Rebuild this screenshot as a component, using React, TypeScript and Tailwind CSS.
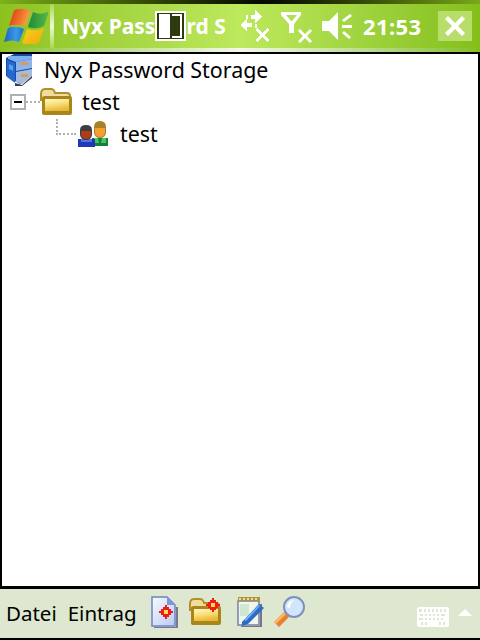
import React from 'react';

const uiFont = '[font-family:"Noto_Sans","Liberation_Sans",sans-serif]';

const WinFlag = () => (
  <svg width="44" height="36" viewBox="0 0 44 36">
    <defs>
      <linearGradient id="fr" x1="0" y1="0" x2="1" y2="0.3">
        <stop offset="0" stopColor="#d93a10" />
        <stop offset="0.6" stopColor="#f2702a" />
        <stop offset="1" stopColor="#f0a848" />
      </linearGradient>
      <linearGradient id="fg" x1="0" y1="0" x2="1" y2="0">
        <stop offset="0" stopColor="#1f8a3a" />
        <stop offset="1" stopColor="#58b848" />
      </linearGradient>
      <linearGradient id="fb" x1="0" y1="0" x2="1" y2="0">
        <stop offset="0" stopColor="#1c62c4" />
        <stop offset="0.6" stopColor="#3a9ae8" />
        <stop offset="1" stopColor="#1f70c8" />
      </linearGradient>
      <linearGradient id="fy" x1="0" y1="0" x2="1" y2="1">
        <stop offset="0" stopColor="#f8d020" />
        <stop offset="1" stopColor="#f0a808" />
      </linearGradient>
    </defs>
    <path d="M10 2 Q19 -1 27 3 L21 19 Q13 15 5 18 Z" fill="url(#fr)" />
    <path d="M29 4 Q37 8 45 3 L40 18 Q32 22 24 19 Z" fill="url(#fg)" />
    <path d="M4 20 Q12 17 20 21 L15 34 Q8 31 0 34 Z" fill="url(#fb)" />
    <path d="M23 21 Q32 24 40 20 L35 35 Q26 38 18 35 Z" fill="url(#fy)" />
  </svg>
);

const XMark = ({ x, y }: { x: number; y: number }) => (
  <path
    transform={`translate(${x} ${y})`}
    d="M2 0l5 5 5-5 2 2-5 5 5 5-2 2-5-5-5 5-2-2 5-5-5-5z"
    fill="white"
  />
);

const SyncX = () => (
  <svg width="32" height="34" viewBox="0 0 32 34" fill="white" shapeRendering="crispEdges">
    <path d="M11 5h4V0l7 6v1l-7 6V9h-4z" />
    <path d="M6 5h2v4H6z" />
    <path d="M0 15l7-6v4h5v4H7v4l-7-6z" />
    <path d="M15 14h2v4h-2z" />
    <XMark x={15} y={18} />
  </svg>
);

const AntennaX = () => (
  <svg width="32" height="34" viewBox="0 0 32 34" fill="white">
    <path d="M0 1h20v3l-7 9v9H8v-9L0 4z M5 4l5 6 1 0 5-6z" fillRule="evenodd" />
    <XMark x={17} y={18} />
  </svg>
);

const SpeakerOff = () => (
  <svg width="32" height="32" viewBox="0 0 32 32" fill="white">
    <path d="M0 10h7L16 1v28L7 20H0z" />
    <path d="M20 9l8-6 2 2-8 6z M20 14h10v3H20z M20 22l2-2 7 6-2 2z" />
  </svg>
);

const Badge = () => (
  <g shapeRendering="crispEdges">
    <path d="M6 0h2v2h2v2h2v2h2v2h-2v2h-2v2H8v2H6v-2H4v-2H2V8H0V6h2V4h2V2h2z" fill="#f01a1a" />
    <rect x="5" y="5" width="4" height="4" fill="#ffe14a" />
  </g>
);

const ServerIcon = () => (
  <svg width="28" height="32" viewBox="0 0 28 32">
    <path d="M0 4l8-4h18v20l-12 10L0 22z" fill="#1a4aa8" />
    <path d="M2 2h24v3L10 8 2 5z" fill="#7fb0ee" />
    <path d="M10 8l16-3v9l-16 3z" fill="#8fb4e8" />
    <path d="M10 18l16-3v7l-10 8-6-2z" fill="#a4bcdc" />
    <rect x="15" y="8" width="7" height="3" fill="#d89a60" />
    <rect x="15" y="20" width="7" height="3" fill="#d89a60" />
    <path d="M1 6l8 3v20l-8-6z" fill="#2568d0" />
    <path d="M3 10l4 2v5l-4-2z" fill="#58a0ee" />
    <path d="M9 29l7 2 10-9v2L16 32H9z" fill="#3a3a50" />
  </svg>
);

const FolderOpen = ({ badge, id }: { badge?: boolean; id: string }) => (
  <svg width="33" height="28" viewBox="0 0 33 28">
    <defs>
      <linearGradient id={id} x1="0" y1="0" x2="0.3" y2="1">
        <stop offset="0" stopColor="#fdf6c8" />
        <stop offset="0.5" stopColor="#fbe07a" />
        <stop offset="1" stopColor="#e8b838" />
      </linearGradient>
    </defs>
    <path d="M1 6q0-5 4-5h6q3 0 4 4h12q3 0 3 3v4H1z" fill="#f0dc9c" stroke="#b48e28" strokeWidth="2" />
    <path d="M2 10q0-2 3-2h25q2 0 2 2v15q0 2-2 2H4q-2 0-2-2z" fill="#a8861c" />
    <path d="M5 11h24v12H5z" fill={`url(#${id})`} />
    {badge && (
      <g transform="translate(17 0)">
        <Badge />
      </g>
    )}
  </svg>
);

const Users = () => (
  <svg width="30" height="26" viewBox="0 0 30 26">
    <path d="M14 17h16v8H14z" fill="#15803a" />
    <path d="M16 17h4l1 5h2l1-5h4v5H16z" fill="#48c468" />
    <path d="M16 6q0-6 6-6t6 6v6q-1 5-6 5t-6-5z" fill="#a8802a" />
    <path d="M17 7h10v5q-1 4-5 4t-5-4z" fill="#f4a030" />
    <path d="M0 18h17v8H0z" fill="#2038b8" />
    <path d="M3 18h11v3H3z" fill="#5070e8" />
    <path d="M2 9q0-5 6-5t6 5v5q-1 5-6 5t-6-5z" fill="#3c3c44" />
    <path d="M3 10h10v4q-1 4-5 4t-5-4z" fill="#b03c14" />
  </svg>
);

const NewDoc = () => (
  <svg width="28" height="32" viewBox="0 0 28 32">
    <defs>
      <linearGradient id="nd" x1="0" y1="0" x2="1" y2="1">
        <stop offset="0" stopColor="#f6f9ff" />
        <stop offset="1" stopColor="#b8ccf4" />
      </linearGradient>
    </defs>
    <path d="M1 1h15l8 8v21H1z" fill="url(#nd)" stroke="#6f83c0" strokeWidth="1.5" />
    <path d="M16 1l8 8h-8z" fill="#7f98d8" />
    <path d="M3 31h22V11h2v21H3z" fill="#77778e" />
    <g transform="translate(8 9)">
      <Badge />
    </g>
  </svg>
);

const Notepad = () => (
  <svg width="28" height="32" viewBox="0 0 28 32">
    <path d="M1 5h21v24H1z" fill="#eef6ee" stroke="#7a80a4" strokeWidth="1.5" />
    <path d="M23 8h2v23H4v-1h19z" fill="#74748a" />
    <path d="M1 1h22v4H1z" fill="#b09438" />
    <path d="M2 2h2v2H2zm4 0h2v2H6zm4 0h2v2h-2zm4 0h2v2h-2zm4 0h2v2h-2z" fill="#ece0a0" />
    <path d="M3 8h9v12H3z" fill="#cfe8d4" />
    <path d="M5 26L22 8l5 4L11 28l-6 2z" fill="#2a6cc8" />
    <path d="M7 24L22 9l1 1L9 25z" fill="#78b0f0" />
  </svg>
);

const Search = () => (
  <svg width="33" height="32" viewBox="0 0 33 32">
    <path d="M1 26L11 16l5 5L6 31z" fill="#e88030" />
    <path d="M1 26l10-10 2 2L3 28z" fill="#f8b868" />
    <circle cx="21" cy="11" r="10" fill="#cfe6fb" stroke="#8090ba" strokeWidth="2" />
    <path d="M14 11q1-7 8-7q-5 2-5 8z" fill="white" />
  </svg>
);

const Keyboard = () => (
  <svg width="32" height="20" viewBox="0 0 32 20" shapeRendering="crispEdges">
    <path d="M1 0h30v1h1v18h-1v1H1v-1H0V1h1z" fill="white" />
    <path
      d="M2 2h3v3H2zm5 0h2v3H7zm4 0h2v3h-2zm4 0h2v3h-2zm4 0h2v3h-2zm4 0h2v3h-2zm4 0h2v3h-2zM3 7h3v2H3zm5 0h2v2H8zm4 0h2v2h-2zm4 0h2v2h-2zm4 0h2v2h-2zm4 0h4v2h-4zM2 11h4v2H2zm6 0h2v2H8zm4 0h2v2h-2zm4 0h2v2h-2zm4 0h2v2h-2zm4 0h2v2h-2zM4 15h2v3H4zm4 0h2v3H8zm14 0h2v3h-2zm4 0h2v3h-2z"
      fill="#dee8d0"
    />
  </svg>
);

export default function App() {
  return (
    <div className={`relative flex h-[640px] w-[480px] flex-col overflow-hidden bg-white ${uiFont}`}>
      {/* Title bar */}
      <div className="h-[4px] shrink-0 bg-gradient-to-r from-[#7db21b] via-[#050800] via-55% to-[#79a91a]" />
      <div className="flex h-[44px] shrink-0 items-center bg-gradient-to-r from-[#8cc21e] via-[#bde95c] to-[#84bf18] text-white">
        <div className="ml-[4px] w-[46px] shrink-0">
          <WinFlag />
        </div>
        <div className="h-full w-[4px] shrink-0 bg-gradient-to-b from-[#a9d84a] via-[#eef8d2] to-[#a9d84a]" />
        <div className="ml-[8px] w-[164px] shrink-0 overflow-hidden whitespace-nowrap text-[21px] font-bold leading-[44px]">
          Nyx Password S
        </div>
        <div className="ml-[14px] mt-[2px] shrink-0">
          <SyncX />
        </div>
        <div className="ml-[9px] mt-[4px] shrink-0">
          <AntennaX />
        </div>
        <div className="ml-[9px] mt-[2px] shrink-0">
          <SpeakerOff />
        </div>
        <div className="ml-[9px] w-[62px] shrink-0 text-[22px] font-bold leading-[44px] tracking-[0.4px]">21:53</div>
        <div className="ml-[13px] flex h-[30px] w-[34px] shrink-0 items-center justify-center bg-[#b7dd6b]">
          <svg width="20" height="20" viewBox="0 0 20 20" fill="white">
            <path d="M3 0l7 7 7-7 3 3-7 7 7 7-3 3-7-7-7 7-3-3 7-7-7-7z" />
          </svg>
        </div>
      </div>
      <div className="h-[4px] shrink-0 bg-gradient-to-r from-[#8cc21e] via-[#f4f8e8] to-[#84bf18]" />

      {/* Tree view */}
      <div className="flex min-h-0 flex-1 flex-col border-x-2 border-t-2 border-b-[3px] border-black text-[21.4px] leading-[32px] text-black">
        <div className="flex h-[32px] items-center">
          <div className="ml-[4px] w-[38px] shrink-0">
            <ServerIcon />
          </div>
          <span>Nyx Password Storage</span>
        </div>
        <div className="flex h-[32px] items-center">
          <div className="ml-[8px] flex h-[16px] w-[16px] shrink-0 items-center justify-center border-2 border-[#b0b0b0] bg-white">
            <div className="h-[2px] w-[8px] bg-black" />
          </div>
          <div className="w-[14px] shrink-0 border-t-2 border-dotted border-[#b0b0b0]" />
          <div className="w-[42px] shrink-0">
            <FolderOpen id="tf" />
          </div>
          <span>test</span>
        </div>
        <div className="flex h-[32px] items-center">
          <div className="mb-[14px] ml-[54px] h-[16px] w-[20px] shrink-0 border-b-2 border-l-2 border-dotted border-[#b0b0b0]" />
          <div className="ml-[2px] w-[42px] shrink-0">
            <Users />
          </div>
          <span>test</span>
        </div>
      </div>

      {/* Bottom menu bar */}
      <div className="flex h-[51px] shrink-0 items-center border-b-2 border-black bg-[#dee8d0] text-[20.5px] text-black">
        <span className="ml-[6px]">Datei</span>
        <span className="ml-[11px]">Eintrag</span>
        <div className="mb-[3px] ml-[14px] shrink-0">
          <NewDoc />
        </div>
        <div className="mb-[3px] ml-[10px] shrink-0">
          <FolderOpen badge id="bf" />
        </div>
        <div className="mb-[3px] ml-[15px] shrink-0">
          <Notepad />
        </div>
        <div className="mb-[3px] ml-[8px] shrink-0">
          <Search />
        </div>
        <div className="ml-[111px] mt-[6px] shrink-0">
          <Keyboard />
        </div>
        <div className="mb-[2px] ml-[9px] h-0 w-0 border-x-[7px] border-b-[7px] border-x-transparent border-b-white" />
      </div>

      {/* Busy indicator drawn over the title */}
      <div className="absolute left-[155px] top-[11px] flex h-[30px] w-[31px] border-2 border-white bg-[#2f3a10] py-[1px] pl-[2px] pr-[2px]">
        <div className="h-full w-[11px] bg-white" />
        <div className="ml-auto h-full w-[10px] border-y-2 border-r-2 border-white" />
      </div>
    </div>
  );
}
